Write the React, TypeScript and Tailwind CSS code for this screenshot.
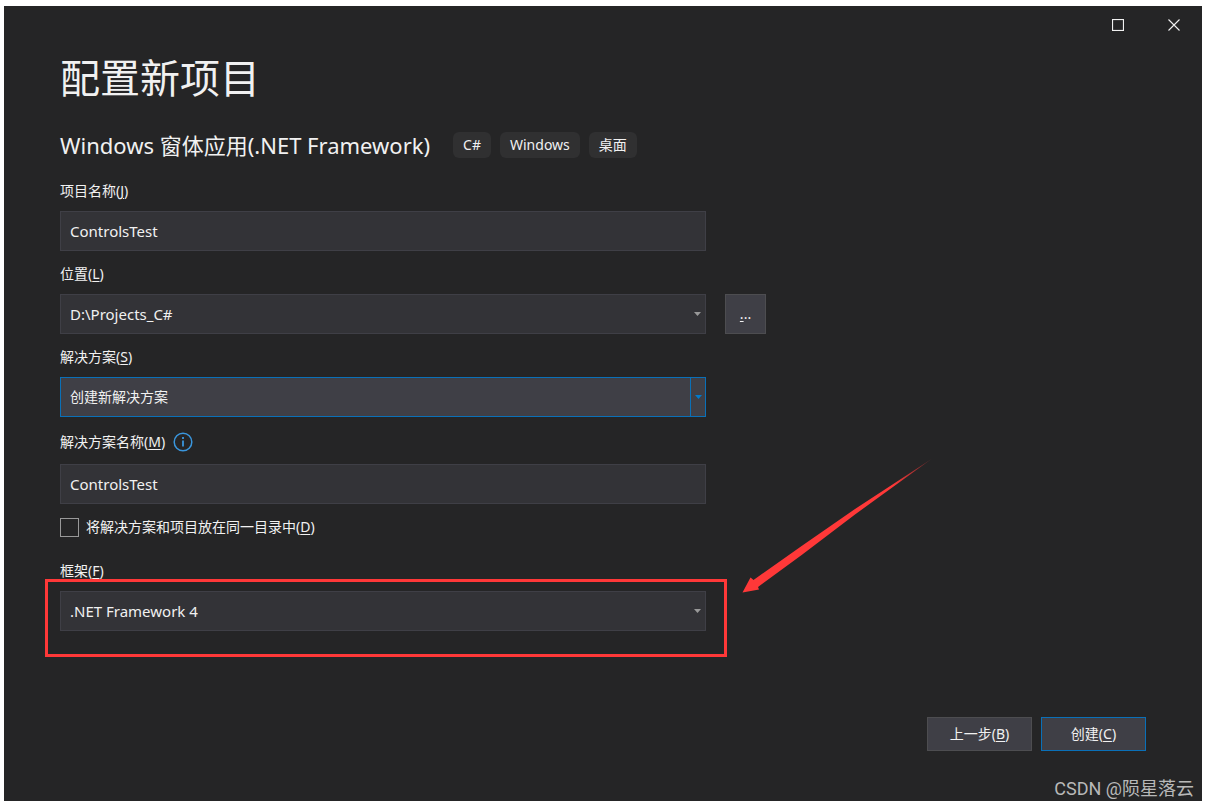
import type { ReactNode } from 'react';
import clsx from 'clsx';

const TAGS = ['C#', 'Windows', '桌面'];

function Mnemonic({ text, letter }: { text: string; letter: string }) {
  return (
    <>
      {text}(<u className="underline underline-offset-2">{letter}</u>)
    </>
  );
}

interface FieldProps {
  id: string;
  label: string;
  letter: string;
  icon?: ReactNode;
  children: ReactNode;
}

function Field({ id, label, letter, icon, children }: FieldProps) {
  return (
    <div className="flex flex-col gap-2.5">
      <div className={clsx('flex items-center gap-2', icon ? 'h-6' : 'h-5')}>
        <label htmlFor={id}>
          <Mnemonic text={label} letter={letter} />
        </label>
        {icon}
      </div>
      {children}
    </div>
  );
}

function TextBox({ id, value }: { id: string; value: string }) {
  return (
    <input
      id={id}
      type="text"
      defaultValue={value}
      className="h-10 w-full border border-[#3f3f46] bg-[#333337] px-[9px] text-[15px] outline-none"
    />
  );
}

function ComboBox({ id, value, active }: { id: string; value: string; active?: boolean }) {
  return (
    <div className="relative w-full">
      <select
        id={id}
        defaultValue={value}
        className={clsx(
          'block h-10 w-full appearance-none border px-[9px] outline-none',
          active ? 'border-[#0a70b8] bg-[#3f3f46] text-sm' : 'border-[#3f3f46] bg-[#333337] text-[15px]'
        )}
      >
        <option>{value}</option>
      </select>
      <span
        className={clsx(
          'pointer-events-none absolute inset-y-0 right-0 flex w-4 items-center justify-center pr-px',
          active ? 'border-l border-[#0a70b8] text-[#007acc]' : 'text-[#999999]'
        )}
      >
        <svg width="7" height="4" viewBox="0 0 7 4" fill="currentColor">
          <path d="M0 0h7L3.5 4z" />
        </svg>
      </span>
    </div>
  );
}

function InfoIcon() {
  return (
    <svg width="20" height="20" viewBox="0 0 20 20" fill="none" stroke="#3a96dd">
      <circle cx="10" cy="10" r="8.8" strokeWidth="1.5" />
      <path d="M10 8.5v6M10 5v2" strokeWidth="1.8" />
    </svg>
  );
}

export default function App() {
  return (
    <div className="flex min-h-screen bg-white py-1.5 pr-[7px] pl-1 font-['Noto_Sans','Noto_Sans_CJK_SC',sans-serif] text-sm leading-5 text-[#f1f1f1]">
      <main className="relative flex flex-1 flex-col bg-[#252526]">
        {/* Window buttons */}
        <div className="flex h-[38px] justify-end">
          <button aria-label="最大化" className="flex w-14 items-center justify-center">
            <svg width="12" height="12" viewBox="0 0 12 12" fill="none" stroke="#f1f1f1">
              <rect x="0.5" y="0.5" width="11" height="11" strokeWidth="1.2" />
            </svg>
          </button>
          <button aria-label="关闭" className="flex w-14 items-center justify-center">
            <svg width="12" height="12" viewBox="0 0 12 12" fill="none" stroke="#f1f1f1">
              <path d="M0.5 0.5l11 11M11.5 0.5l-11 11" strokeWidth="1.1" />
            </svg>
          </button>
        </div>

        <div className="flex flex-1 flex-col px-14 pb-[50px]">
          <h1 className="text-[40px] leading-[68px]">配置新项目</h1>

          <div className="mt-5 flex items-center gap-[9px]">
            <h2 className="mr-3.5 text-[22px] leading-[26px]">Windows 窗体应用(.NET Framework)</h2>
            {TAGS.map((tag) => (
              <span key={tag} className="rounded-md bg-[#303031] px-2.5 py-[3px]">
                {tag}
              </span>
            ))}
          </div>

          <form className="mt-[23px] flex max-w-[646px] flex-col gap-[13px]">
            <Field id="project" label="项目名称" letter="J">
              <TextBox id="project" value="ControlsTest" />
            </Field>

            <Field id="location" label="位置" letter="L">
              <div className="relative">
                <ComboBox id="location" value="D:\Projects_C#" />
                {/* Browse button hangs off the right of the column */}
                <button
                  type="button"
                  aria-label="浏览"
                  className="absolute top-0 left-full ml-[19px] h-10 w-[41px] border border-[#4d4d50] bg-[#3f3f46]"
                >
                  <u className="underline underline-offset-2">.</u>..
                </button>
              </div>
            </Field>

            <Field id="solution" label="解决方案" letter="S">
              <ComboBox id="solution" value="创建新解决方案" active />
            </Field>

            <Field id="solutionName" label="解决方案名称" letter="M" icon={<InfoIcon />}>
              <TextBox id="solutionName" value="ControlsTest" />
            </Field>

            <div className="mb-[11px] flex h-5 items-center gap-[7px]">
              <input
                id="sameDir"
                type="checkbox"
                className="size-[19px] appearance-none border border-[#999999] bg-[#252526]"
              />
              <label htmlFor="sameDir">
                <Mnemonic text="将解决方案和项目放在同一目录中" letter="D" />
              </label>
            </div>

            <Field id="framework" label="框架" letter="F">
              <div className="relative">
                <ComboBox id="framework" value=".NET Framework 4" />
                {/* Highlight and arrow */}
                <div className="pointer-events-none absolute -top-3 -right-[21px] -bottom-[26px] -left-[15px] border-3 border-[#ff3838]" />
                <svg
                  className="pointer-events-none absolute bottom-9 left-full ml-9"
                  width="190"
                  height="136"
                  viewBox="0 0 190 136"
                >
                  <defs>
                    <linearGradient id="tail" x1="0" y1="1" x2="1" y2="0">
                      <stop offset="0.8" stopColor="#ff3838" />
                      <stop offset="1" stopColor="#ff3838" stopOpacity="0.3" />
                    </linearGradient>
                  </defs>
                  <path
                    d="M0.5 133.5L8.5 118.5L11.5 121L60 86.8L113 50L189.5 0L113 55.5L60 95.8L16 128L17 130.5Z"
                    fill="url(#tail)"
                  />
                </svg>
              </div>
            </Field>
          </form>

          <div className="mt-auto flex justify-end gap-[9px]">
            <button className="h-[34px] w-[105px] border border-[#4d4d50] bg-[#3f3f46]">
              <Mnemonic text="上一步" letter="B" />
            </button>
            <button className="h-[34px] w-[105px] border border-[#0a70b8] bg-[#3f3f46]">
              <Mnemonic text="创建" letter="C" />
            </button>
          </div>
        </div>

        <p className="absolute right-2 bottom-0 font-['Roboto','Noto_Sans_CJK_SC',sans-serif] text-lg leading-6 text-[#b8b8b8]">
          CSDN @陨星落云
        </p>
      </main>
    </div>
  );
}
